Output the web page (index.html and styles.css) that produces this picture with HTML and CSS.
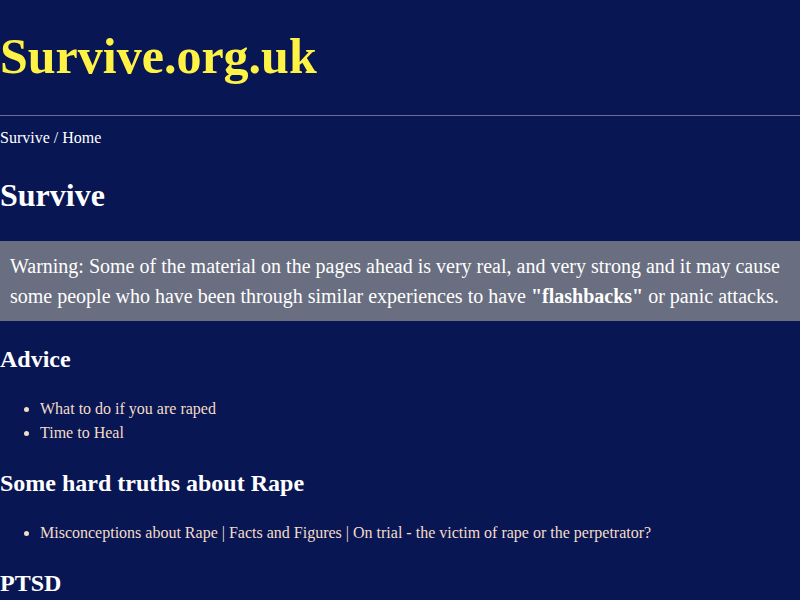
FILE: index.html
```html
<!DOCTYPE html>
<html lang="en">
<head>
<meta charset="utf-8">
<title>Survive.org.uk</title>
<link rel="stylesheet" href="styles.css">
</head>
<body>
<header class="site-header">
  <h1 class="site-title">Survive.org.uk</h1>
</header>
<nav class="breadcrumb">Survive / Home</nav>
<main class="content">
  <h1 class="page-title">Survive</h1>
  <p class="warning">Warning: Some of the material on the pages ahead is very real, and very strong and it may cause some people who have been through similar experiences to have <strong>"flashbacks"</strong> or panic attacks.</p>
  <h2 class="section-title">Advice</h2>
  <ul class="links">
    <li><a href="#">What to do if you are raped</a></li>
    <li><a href="#">Time to Heal</a></li>
  </ul>
  <h2 class="section-title">Some hard truths about Rape</h2>
  <ul class="links">
    <li><a href="#">Misconceptions about Rape</a> | <a href="#">Facts and Figures</a> | <a href="#">On trial - the victim of rape or the perpetrator?</a></li>
  </ul>
  <h2 class="section-title">PTSD</h2>
</main>
</body>
</html>
```
FILE: styles.css
```css
html, body {
  margin: 0;
  padding: 0;
  background: #081654;
}
body {
  font-family: "Liberation Serif", "Times New Roman", serif;
  color: #ffffff;
  font-size: 16px;
}
.site-header {
  padding: 27px 0 30px;
  border-bottom: 1px solid #6a6f92;
}
.site-title {
  margin: 0;
  font-size: 50px;
  font-weight: bold;
  color: #fef344;
  line-height: 58px;
}
.breadcrumb {
  margin: 13px 0 0;
  line-height: 18px;
  color: #ffffff;
}
.page-title {
  margin: 30px 0 27px;
  font-size: 32px;
  line-height: 37px;
}
.warning {
  margin: 0;
  background: #696e80;
  padding: 10px;
  font-size: 20px;
  line-height: 30px;
}
.section-title {
  margin: 24px 0 24px;
  font-size: 24px;
  line-height: 28px;
}
.links {
  margin: 0;
  padding-left: 40px;
  line-height: 24px;
  color: #f4dcc8;
}
.links a {
  color: #f4dcc8;
  text-decoration: none;
}
```
